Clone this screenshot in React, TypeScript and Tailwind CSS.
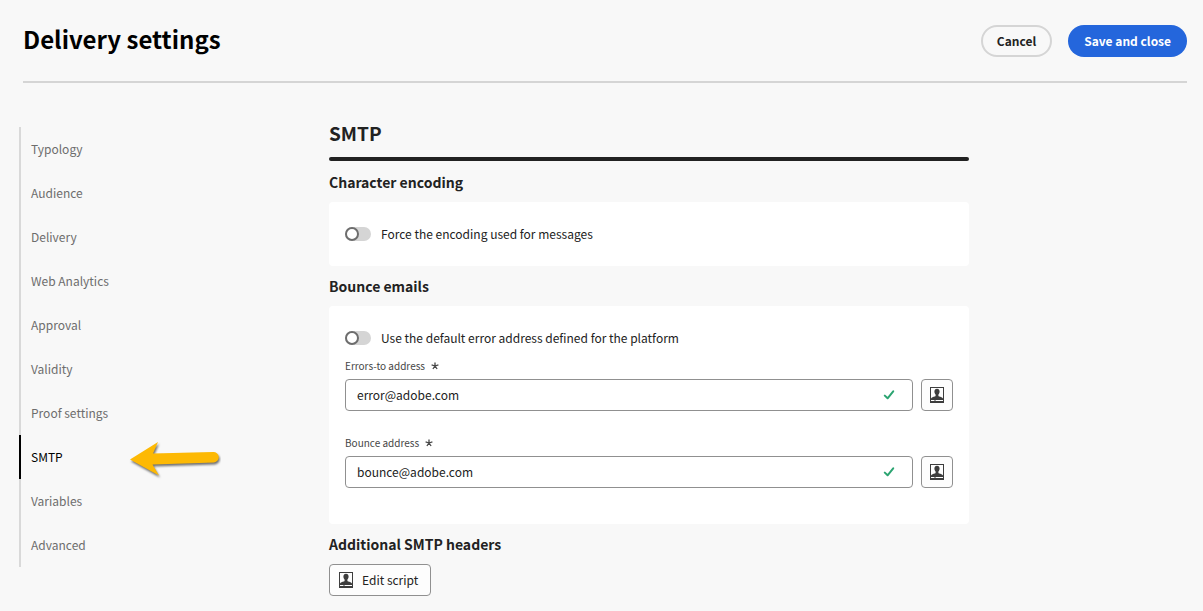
import { useState } from "react";

const sections = [
  "Typology",
  "Audience",
  "Delivery",
  "Web Analytics",
  "Approval",
  "Validity",
  "Proof settings",
  "SMTP",
  "Variables",
  "Advanced",
];

function PersonalizeIcon() {
  return (
    <svg width="14" height="16" viewBox="0 0 14 16" className="shrink-0 text-[#3d3d3d]" aria-hidden="true">
      <rect x="0.5" y="0.5" width="13" height="15" fill="none" stroke="currentColor" />
      <path
        d="M7 1.8c1.7 0 2.6 1.2 2.6 2.8 0 1.3-.6 2.3-1.2 3v1.1c0 .5.3.7.8.8 1.6.4 3.2.8 3.8 2V13H1v-1.5c.6-1.2 2.2-1.6 3.8-2 .5-.1.8-.3.8-.8V7.600C5 6.900 4.400 5.900 4.400 4.600 4.400 3 5.300 1.800 7 1.800Z"
        fill="currentColor"
      />
      <path d="M0 12h14v4H0z" fill="currentColor" />
      <path d="M1 13h3.500v1H1zM5.500 13H13v1H5.500z" fill="#fff" />
    </svg>
  );
}

function ArrowMarker() {
  return (
    <svg
      width="96"
      height="44"
      viewBox="0 0 96 44"
      className="pointer-events-none absolute top-0.5 left-[106px]"
      aria-hidden="true"
    >
      <path
        d="M5 22.500 33 5 28 16.500 88 15a5 5 0 0 1 1 10.500L27.500 27.500 34 38.500Z"
        fill="#fdb904"
        className="drop-shadow-[1px_2px_1px_rgba(0,0,0,0.55)]"
      />
    </svg>
  );
}

function Toggle({ id, label }: { id: string; label: string }) {
  const [on, setOn] = useState(false);
  return (
    <div className="flex h-8 items-center gap-2.5">
      <input
        id={id}
        type="checkbox"
        role="switch"
        checked={on}
        onChange={(e) => setOn(e.target.checked)}
        className="h-3.5 w-[26px] shrink-0 cursor-pointer appearance-none rounded-full bg-[#d5d5d5] before:block before:size-3.5 before:rounded-full before:border-2 before:border-[#6d6d6d] before:bg-white checked:bg-[#4b4b4b] checked:before:ml-3"
      />
      <label htmlFor={id} className="text-xs leading-5 text-[#222222]">
        {label}
      </label>
    </div>
  );
}

function AddressField({ id, label, initial }: { id: string; label: string; initial: string }) {
  const [value, setValue] = useState(initial);
  return (
    <div className="pb-5">
      <label htmlFor={id} className="flex h-[25px] items-center gap-1.5 pb-0.5 text-[10px] leading-4 text-[#464646]">
        {label}
        <svg width="8" height="8" viewBox="0 0 8 8" stroke="currentColor" strokeWidth="1.3" aria-hidden="true">
          <path d="M4 4V.4M4 4 .6 2.900M4 4l3.400-1.100M4 4 1.900 7M4 4l2.100 3" />
        </svg>
      </label>
      <div className="flex gap-2">
        <div className="flex h-8 min-w-0 flex-1 items-center rounded border border-[#909090] bg-white pr-[17px]">
          <input
            id={id}
            type="email"
            required
            value={value}
            onChange={(e) => setValue(e.target.value)}
            className="h-full min-w-0 flex-1 bg-transparent px-[11px] pb-0.5 text-xs text-[#222222] outline-none"
          />
          <svg width="12" height="10" viewBox="0 0 12 10" fill="none" stroke="#2ba471" strokeWidth="2" strokeLinecap="round" strokeLinejoin="round" aria-hidden="true">
            <path d="M1.800 5.600 4.600 8.300 10.200 1.400" />
          </svg>
        </div>
        <button
          type="button"
          aria-label={`Personalize ${label}`}
          className="flex size-8 shrink-0 items-center justify-center rounded border border-[#909090] bg-[#fdfdfd]"
        >
          <PersonalizeIcon />
        </button>
      </div>
    </div>
  );
}

function SectionTitle({ children }: { children: string }) {
  return <h3 className="flex h-10 items-center text-sm leading-5 font-bold text-[#222222]">{children}</h3>;
}

export default function App() {
  return (
    <div className="min-h-screen bg-[#f8f8f8] font-['Noto_Sans_CJK_SC','Noto_Sans',sans-serif] text-[#222222]">
      <header className="mr-4 ml-[23px] flex items-start justify-between border-b-2 border-[#d5d5d5] pt-[25px] pb-6">
        <h1 className="text-2xl leading-7 font-bold text-black">Delivery settings</h1>
        <div className="flex gap-4">
          <button type="button" className="h-8 rounded-full border-2 border-[#d5d5d5] px-3.5 text-xs font-bold">
            Cancel
          </button>
          <button type="button" className="h-8 rounded-full bg-[#2466dc] px-4 text-xs font-bold text-white">
            Save and close
          </button>
        </div>
      </header>

      <div className="flex items-start pr-4 pb-[15px] pl-[19px]">
        <nav aria-label="Delivery settings sections" className="w-[310px] shrink-0 pt-11">
          <ul>
            {sections.map((name) => {
              const active = name === "SMTP";
              return (
                <li key={name} className="relative">
                  <a
                    href={`#${name.toLowerCase().replace(" ", "-")}`}
                    aria-current={active ? "page" : undefined}
                    className={`flex h-11 items-center border-l-2 pl-2.5 text-xs ${
                      active ? "border-black text-black" : "border-[#d9d9d9] text-[#6d6d6d]"
                    }`}
                  >
                    {name}
                  </a>
                  {active && <ArrowMarker />}
                </li>
              );
            })}
          </ul>
        </nav>

        <main className="max-w-[640px] min-w-0 flex-1 pt-[38px]">
          <h2 className="text-[19px] leading-6 font-bold">SMTP</h2>
          <div className="mt-3 mb-px h-1 rounded-full bg-[#222222]" />

          <SectionTitle>Character encoding</SectionTitle>
          <section className="rounded bg-white p-4">
            <Toggle id="force-encoding" label="Force the encoding used for messages" />
          </section>

          <SectionTitle>Bounce emails</SectionTitle>
          <section className="rounded bg-white p-4">
            <Toggle id="default-error-address" label="Use the default error address defined for the platform" />
            <AddressField id="errors-to" label="Errors-to address" initial="error@adobe.com" />
            <AddressField id="bounce" label="Bounce address" initial="bounce@adobe.com" />
          </section>

          <SectionTitle>Additional SMTP headers</SectionTitle>
          <button
            type="button"
            className="flex h-8 items-center gap-[9px] rounded border border-[#909090] bg-[#fdfdfd] pr-3 pl-[9px] text-xs"
          >
            <PersonalizeIcon />
            Edit script
          </button>
        </main>
      </div>
    </div>
  );
}
